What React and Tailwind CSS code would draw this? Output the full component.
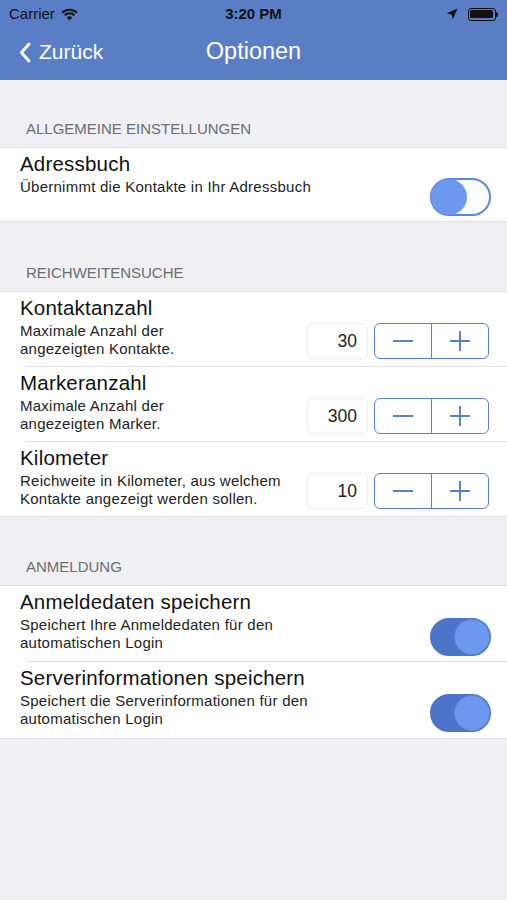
import React, { useState } from "react";

const font = { fontFamily: '"Liberation Sans", Arial, sans-serif' };

const Toggle = ({ on, onChange }) => (
  <button
    onClick={() => onChange(!on)}
    className={`relative block w-[61px] h-[38px] rounded-full border-2 ${
      on ? "bg-[#4c74c9] border-[#4c74c9]" : "bg-white border-[#5b86de]"
    }`}
  >
    <span
      className={`absolute top-[-1px] w-[36px] h-[36px] rounded-full bg-[#6c98ee] ${
        on ? "right-[-1px] border border-[#5f89dc]" : "left-[-1px]"
      }`}
    ></span>
  </button>
);

const Stepper = ({ value, onChange }) => (
  <div className="flex items-center gap-[6px] mr-[2px]">
    <div className="w-[61px] h-[36px] rounded-md border border-[#ececec] bg-white flex items-center justify-end pr-[10px] text-[17.5px] text-[#222]">
      {value}
    </div>
    <div className="flex w-[115px] h-[36px] rounded-md border-[1.5px] border-[#5b80c8] overflow-hidden">
      <button
        onClick={() => onChange(value - 1)}
        className="flex-1 flex items-center justify-center border-r-[1.5px] border-[#5b80c8]"
      >
        <span className="block w-[20px] h-[2px] bg-[#5b80c8]"></span>
      </button>
      <button onClick={() => onChange(value + 1)} className="flex-1 flex items-center justify-center">
        <span className="relative block w-[20px] h-[20px]">
          <span className="absolute left-0 top-[9px] w-[20px] h-[2px] bg-[#5b80c8]"></span>
          <span className="absolute top-0 left-[9px] w-[2px] h-[20px] bg-[#5b80c8]"></span>
        </span>
      </button>
    </div>
  </div>
);

const SectionHeader = ({ children, h }) => (
  <div className={`${h} flex items-end pl-[26px] pb-[7px] text-[15px] text-[#6d6d72]`}>
    {children}
  </div>
);

const Row = ({ title, lines, control, last, h = "h-[74px]", mb = "mb-[6px]" }) => (
  <div className={`relative bg-white ${h} flex justify-between pl-[20px] pr-[16px]`}>
    <div className="pt-[4px]">
      <div className="text-[20.5px] leading-[24px] tracking-[0.2px] text-[#111]">{title}</div>
      <div className="mt-[2px] text-[15px] leading-[18px] tracking-[0.25px] text-[#222]">
        {lines.map((l) => (
          <div key={l}>{l}</div>
        ))}
      </div>
    </div>
    <div className={`self-end flex ${mb}`}>{control}</div>
    {!last && <div className="absolute bottom-0 left-[26px] right-0 h-px bg-[#e0e0e4]"></div>}
  </div>
);

export default function App() {
  const [adress, setAdress] = useState(false);
  const [login, setLogin] = useState(true);
  const [server, setServer] = useState(true);
  const [kontakte, setKontakte] = useState(30);
  const [marker, setMarker] = useState(300);
  const [km, setKm] = useState(10);

  return (
    <div style={font} className="w-[507px] min-h-[900px] bg-[#efeff4]">
      {/* Status + Nav */}
      <div className="bg-[#5a7ec6]">
        <div className="h-[28px] flex items-center justify-between px-[9px] text-[15px] text-[#111]">
          <div className="flex items-center gap-[6px] w-[120px]">
            <span>Carrier</span>
            <svg width="17" height="13" viewBox="0 0 17 13">
              <path d="M8.5 12.5 L5.8 9.6 A3.9 3.9 0 0 1 11.2 9.6 Z" fill="#111" />
              <path d="M3.6 7.3 A7 7 0 0 1 13.4 7.3" stroke="#111" strokeWidth="2" fill="none" />
              <path d="M1.2 4.8 A10.5 10.5 0 0 1 15.8 4.8" stroke="#111" strokeWidth="2" fill="none" />
            </svg>
          </div>
          <div className="font-bold">3:20 PM</div>
          <div className="flex items-center justify-end gap-[10px] w-[120px]">
            <svg width="12" height="12" viewBox="0 0 12 12">
              <path d="M11.5 0.5 L0.8 5.2 L5.6 6.4 L6.8 11.2 Z" fill="#111" />
            </svg>
            <div className="flex items-center">
              <div className="w-[28px] h-[13px] rounded-[3px] border border-[#111] p-[1.5px]">
                <div className="w-full h-full rounded-[1.5px] bg-[#111]"></div>
              </div>
              <div className="w-[2px] h-[5px] bg-[#111] rounded-r-sm"></div>
            </div>
          </div>
        </div>
        <div className="relative h-[52px] flex items-center justify-center pb-[4px]">
          <button className="absolute left-[19px] top-0 h-full pb-[4px] flex items-center gap-[8px] text-white text-[21px]">
            <svg width="12" height="21" viewBox="0 0 12 21">
              <path d="M10 2 L2.5 10.5 L10 19" stroke="white" strokeWidth="3" fill="none" strokeLinecap="round" strokeLinejoin="round" />
            </svg>
            <span>Zurück</span>
          </button>
          <div className="text-white text-[23.5px]">Optionen</div>
        </div>
      </div>

      <SectionHeader h="h-[67px]">ALLGEMEINE EINSTELLUNGEN</SectionHeader>
      <div className="border-y border-[#e0e0e4]">
        <Row
          title="Adressbuch"
          lines={["Übernimmt die Kontakte in Ihr Adressbuch"]}
          control={<Toggle on={adress} onChange={setAdress} />}
          h="h-[73px]"
          mb="mb-[5px]"
          last
        />
      </div>

      <SectionHeader h="h-[69px]">REICHWEITENSUCHE</SectionHeader>
      <div className="border-y border-[#e0e0e4]">
        <Row
          title="Kontaktanzahl"
          lines={["Maximale Anzahl der", "angezeigten Kontakte."]}
          control={<Stepper value={kontakte} onChange={setKontakte} />}
          h="h-[75px]"
          mb="mb-[8px]"
        />
        <Row
          title="Markeranzahl"
          lines={["Maximale Anzahl der", "angezeigten Marker."]}
          control={<Stepper value={marker} onChange={setMarker} />}
          h="h-[75px]"
          mb="mb-[8px]"
        />
        <Row
          title="Kilometer"
          lines={["Reichweite in Kilometer, aus welchem", "Kontakte angezeigt werden sollen."]}
          control={<Stepper value={km} onChange={setKm} />}
          mb="mb-[7px]"
          last
        />
      </div>

      <SectionHeader h="h-[68px]">ANMELDUNG</SectionHeader>
      <div className="border-y border-[#e0e0e4]">
        <Row
          title="Anmeldedaten speichern"
          lines={["Speichert Ihre Anmeldedaten für den", "automatischen Login"]}
          control={<Toggle on={login} onChange={setLogin} />}
          h="h-[76px]"
        />
        <Row
          title="Serverinformationen speichern"
          lines={["Speichert die Serverinformationen für den", "automatischen Login"]}
          control={<Toggle on={server} onChange={setServer} />}
          h="h-[76px]"
          last
        />
      </div>
    </div>
  );
}
